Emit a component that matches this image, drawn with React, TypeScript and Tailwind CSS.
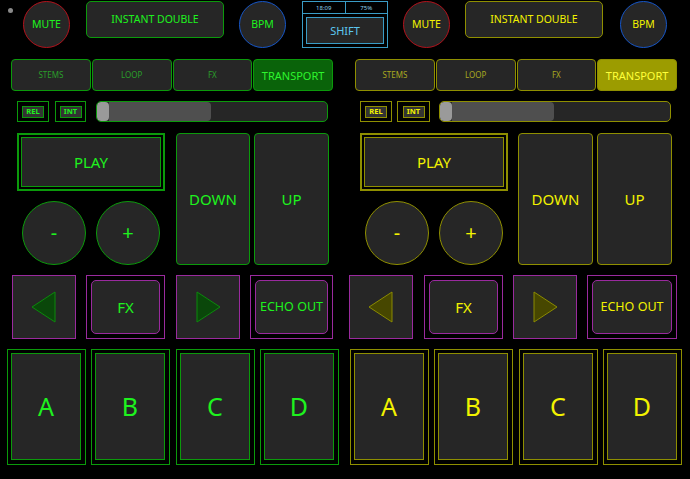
import React from "react";

type Theme = {
  text: string;
  border: string;
  dim: string;
  activeBg: string;
  activeText: string;
  triFill: string;
  triStroke: string;
};

const green: Theme = {
  text: "text-[#1ef21e]",
  border: "border-[#0b9a0b]",
  dim: "text-[#2a9e2a]",
  activeBg: "bg-[#0a630a]",
  activeText: "text-[#2ef52e]",
  triFill: "#0a470a",
  triStroke: "#0b8a0b",
};

const yellow: Theme = {
  text: "text-[#f2f200]",
  border: "border-[#8f8f00]",
  dim: "text-[#a8a820]",
  activeBg: "bg-[#9c9c00]",
  activeText: "text-[#ffff3a]",
  triFill: "#474700",
  triStroke: "#8a8a00",
};

const fill = "bg-[#262626]";

function Round({ label, ring, t }: { label: string; ring: string; t: Theme }) {
  return (
    <div
      className={`flex h-[47px] w-[47px] shrink-0 items-center justify-center rounded-full border-[1.5px] ${ring} ${fill} text-[10.5px] ${t.text}`}
    >
      {label}
    </div>
  );
}

function TopDeck({ t, gapA, gapB }: { t: Theme; gapA: string; gapB: string }) {
  return (
    <>
      <Round label="MUTE" ring="border-[#b3121c]" t={t} />
      <div
        className={`${gapA} flex h-[37px] w-[138px] shrink-0 items-center justify-center rounded-[5px] border ${t.border} ${fill} text-[10.5px] ${t.text}`}
      >
        INSTANT DOUBLE
      </div>
      <div className={gapB}>
        <Round label="BPM" ring="border-[#1656c8]" t={t} />
      </div>
    </>
  );
}

function Tabs({ t }: { t: Theme }) {
  const tabs = ["STEMS", "LOOP", "FX"];
  return (
    <div className="flex h-[32px] w-[322px] shrink-0 gap-px">
      {tabs.map((n) => (
        <div
          key={n}
          className={`flex flex-1 items-center justify-center rounded-[4px] border ${t.border} ${fill} text-[8px] ${t.dim}`}
        >
          {n}
        </div>
      ))}
      <div
        className={`flex flex-1 items-center justify-center rounded-[4px] border ${t.border} ${t.activeBg} text-[11px] ${t.activeText}`}
      >
        TRANSPORT
      </div>
    </div>
  );
}

function SmallBtn({ label, t, w }: { label: string; t: Theme; w: string }) {
  return (
    <div className={`flex h-[21px] ${w} shrink-0 items-center justify-center border-[1.5px] ${t.border}`}>
      <div
        className={`flex h-[12px] w-[22px] items-center justify-center border ${t.border} bg-[#333] text-[7.5px] font-bold ${t.text}`}
      >
        {label}
      </div>
    </div>
  );
}

function Slider({ t }: { t: Theme }) {
  return (
    <div className={`flex h-[21px] w-[232px] shrink-0 overflow-hidden rounded-[5px] border ${t.border} ${fill}`}>
      <div className="flex h-full w-[114px]">
        <div className="h-full w-[12px] rounded-[4px] bg-[#9a9a9a]" />
        <div className="h-full flex-1 rounded-r-[4px] bg-[#4f4f4f]" />
      </div>
    </div>
  );
}

function PlayBlock({ t }: { t: Theme }) {
  return (
    <div className="flex w-[148px] shrink-0 flex-col">
      <div className={`flex h-[58px] items-center justify-center border-2 ${t.border} p-[2px]`}>
        <div
          className={`flex h-full w-full items-center justify-center border-[1.5px] ${t.border} ${fill} text-[15px] ${t.text}`}
        >
          PLAY
        </div>
      </div>
      <div className="mt-[10px] flex gap-[10px] pl-[5px]">
        {["-", "+"].map((s) => (
          <div
            key={s}
            className={`flex h-[64px] w-[64px] items-center justify-center rounded-full border ${t.border} ${fill} text-[20px] ${t.text}`}
          >
            {s}
          </div>
        ))}
      </div>
    </div>
  );
}

function Tall({ label, t, cls }: { label: string; t: Theme; cls: string }) {
  return (
    <div
      className={`${cls} flex h-full shrink-0 items-center justify-center rounded-[4px] border ${t.border} ${fill} text-[15px] ${t.text}`}
    >
      {label}
    </div>
  );
}

function Arrow({ dir, t, cls }: { dir: "l" | "r"; t: Theme; cls: string }) {
  return (
    <div className={`${cls} flex h-[64px] w-[64px] shrink-0 items-center justify-center border border-[#9a2a9e] ${fill}`}>
      <svg width="26" height="32" viewBox="0 0 26 32">
        <polygon
          points={dir === "l" ? "24,1 24,31 1,16" : "2,1 2,31 25,16"}
          fill={t.triFill}
          stroke={t.triStroke}
          strokeWidth="1"
        />
      </svg>
    </div>
  );
}

function FxBtn({ label, t, cls, size }: { label: string; t: Theme; cls: string; size: string }) {
  return (
    <div className={`${cls} flex h-[64px] shrink-0 border border-[#9a2a9e] p-[4px]`}>
      <div
        className={`flex flex-1 items-center justify-center rounded-[5px] border border-[#9a2a9e] ${fill} ${size} ${t.text}`}
      >
        {label}
      </div>
    </div>
  );
}

function Pads({ t }: { t: Theme }) {
  const gaps = ["", "ml-[5px]", "ml-[6px]", "ml-[5px]"];
  return (
    <>
      {["A", "B", "C", "D"].map((l, i) => (
        <div key={l} className={`${gaps[i]} flex h-[116px] w-[79px] shrink-0 border ${t.border} p-[3px] pr-[4px] pb-[4px]`}>
          <div
            className={`flex flex-1 items-center justify-center border-[1.5px] ${t.border} ${fill} text-[25px] ${t.text}`}
          >
            {l}
          </div>
        </div>
      ))}
    </>
  );
}

export default function App() {
  return (
    <div className="flex h-[479px] w-[690px] flex-col overflow-hidden bg-black font-['Noto_Sans',sans-serif] leading-none">
      {/* top row */}
      <div className="flex h-[49px] items-start pl-[8px] pt-[1px]">
        <div className="mt-[7px] h-[5px] w-[5px] shrink-0 rounded-full bg-[#8a8a8a]" />
        <div className="ml-[10px] flex">
          <TopDeck t={green} gapA="ml-[16px]" gapB="ml-[15px]" />
        </div>
        <div className="ml-[16px] flex h-[47px] w-[86px] shrink-0 flex-col border border-[#3a9cc6]">
          <div className="flex h-[12px] border-b border-[#3a9cc6] text-[6px] text-[#8fd0ea]">
            <div className="flex flex-1 items-center justify-center border-r border-[#3a9cc6]">18:09</div>
            <div className="flex flex-1 items-center justify-center">75%</div>
          </div>
          <div className="flex flex-1 p-[3px]">
            <div className={`flex flex-1 items-center justify-center border border-[#3a9cc6] ${fill} text-[11px] text-[#5cc6ef]`}>
              SHIFT
            </div>
          </div>
        </div>
        <div className="ml-[15px] flex">
          <TopDeck t={yellow} gapA="ml-[15px]" gapB="ml-[17px]" />
        </div>
      </div>

      {/* tabs */}
      <div className="mt-[10px] flex pl-[11px]">
        <Tabs t={green} />
        <div className="ml-[22px]">
          <Tabs t={yellow} />
        </div>
      </div>

      {/* rel/int + slider */}
      <div className="mt-[10px] flex pl-[17px]">
        <SmallBtn label="REL" t={green} w="w-[32px]" />
        <div className="ml-[6px]">
          <SmallBtn label="INT" t={green} w="w-[31px]" />
        </div>
        <div className="ml-[10px]">
          <Slider t={green} />
        </div>
        <div className="ml-[32px]">
          <SmallBtn label="REL" t={yellow} w="w-[32px]" />
        </div>
        <div className="ml-[5px]">
          <SmallBtn label="INT" t={yellow} w="w-[33px]" />
        </div>
        <div className="ml-[9px]">
          <Slider t={yellow} />
        </div>
      </div>

      {/* play / down / up */}
      <div className="mt-[11px] flex h-[132px] pl-[17px]">
        <PlayBlock t={green} />
        <Tall label="DOWN" t={green} cls="ml-[11px] w-[74px]" />
        <Tall label="UP" t={green} cls="ml-[4px] w-[75px]" />
        <div className="ml-[31px] flex">
          <PlayBlock t={yellow} />
        </div>
        <Tall label="DOWN" t={yellow} cls="ml-[10px] w-[75px]" />
        <Tall label="UP" t={yellow} cls="ml-[4px] w-[75px]" />
      </div>

      {/* fx row */}
      <div className="mt-[10px] flex pl-[12px]">
        <Arrow dir="l" t={green} cls="" />
        <FxBtn label="FX" t={green} cls="ml-[10px] w-[79px]" size="text-[15px]" />
        <Arrow dir="r" t={green} cls="ml-[11px]" />
        <FxBtn label="ECHO OUT" t={green} cls="ml-[10px] w-[83px]" size="text-[12.5px]" />
        <Arrow dir="l" t={yellow} cls="ml-[16px]" />
        <FxBtn label="FX" t={yellow} cls="ml-[11px] w-[79px]" size="text-[15px]" />
        <Arrow dir="r" t={yellow} cls="ml-[10px]" />
        <FxBtn label="ECHO OUT" t={yellow} cls="ml-[10px] w-[90px]" size="text-[12.5px]" />
      </div>

      {/* pads */}
      <div className="mt-[10px] flex pl-[7px]">
        <Pads t={green} />
        <div className="ml-[11px] flex">
          <Pads t={yellow} />
        </div>
      </div>
    </div>
  );
}
